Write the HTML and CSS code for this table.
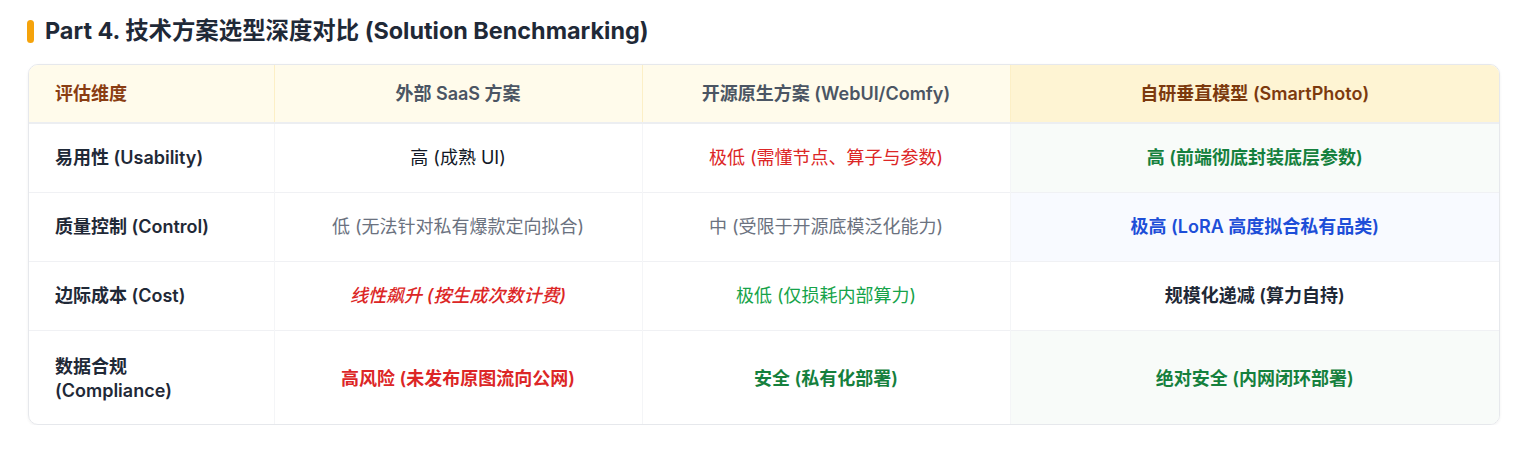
FILE: index.html
```html
<!DOCTYPE html>
<html lang="zh-CN">
<head>
<meta charset="utf-8">
<title>Solution Benchmarking</title>
<link rel="stylesheet" href="styles.css">
</head>
<body>
<section class="section">
  <h2 class="title"><span class="title-bar"></span>Part 4. 技术方案选型深度对比 (Solution Benchmarking)</h2>
  <div class="table-wrap">
    <table class="cmp">
      <colgroup>
        <col class="c1"><col class="c2"><col class="c3"><col class="c4">
      </colgroup>
      <thead>
        <tr>
          <th class="h-dim">评估维度</th>
          <th class="h-mid">外部 SaaS 方案</th>
          <th class="h-mid">开源原生方案 (WebUI/Comfy)</th>
          <th class="h-own">自研垂直模型 (SmartPhoto)</th>
        </tr>
      </thead>
      <tbody>
        <tr>
          <td class="dim">易用性 (Usability)</td>
          <td class="t-dark">高 (成熟 UI)</td>
          <td class="t-red">极低 (需懂节点、算子与参数)</td>
          <td class="own own-green t-green-b">高 (前端彻底封装底层参数)</td>
        </tr>
        <tr>
          <td class="dim">质量控制 (Control)</td>
          <td class="t-gray">低 (无法针对私有爆款定向拟合)</td>
          <td class="t-gray">中 (受限于开源底模泛化能力)</td>
          <td class="own own-blue t-blue-b">极高 (LoRA 高度拟合私有品类)</td>
        </tr>
        <tr>
          <td class="dim">边际成本 (Cost)</td>
          <td class="t-red-i">线性飙升 (按生成次数计费)</td>
          <td class="t-green">极低 (仅损耗内部算力)</td>
          <td class="own t-dark-b">规模化递减 (算力自持)</td>
        </tr>
        <tr>
          <td class="dim">数据合规<br>(Compliance)</td>
          <td class="t-red-b">高风险 (未发布原图流向公网)</td>
          <td class="t-green-b">安全 (私有化部署)</td>
          <td class="own own-green t-green-b">绝对安全 (内网闭环部署)</td>
        </tr>
      </tbody>
    </table>
  </div>
</section>
</body>
</html>
```

FILE: styles.css
```css
* { box-sizing: border-box; }

html, body {
  margin: 0;
  padding: 0;
  background: #ffffff;
}

body {
  font-family: Inter, "Noto Sans CJK SC", "Noto Sans", sans-serif;
  color: #1f2937;
}

.section {
  padding: 17px 24px 0 28px;
}

.title {
  display: flex;
  align-items: center;
  gap: 11px;
  margin: 0;
  font-size: 23.4px;
  font-weight: 700;
  line-height: 28px;
  color: #1f2937;
}

.title-bar {
  display: inline-block;
  flex: none;
  width: 7px;
  height: 23px;
  border-radius: 4px;
  background: #f5a30b;
  margin-left: -1px;
}

.table-wrap {
  margin-top: 19px;
  width: 1472px;
  border: 1px solid #e6e8ec;
  border-radius: 10px;
  overflow: hidden;
  box-shadow: 0 1px 3px rgba(17, 24, 39, 0.06);
}

.cmp {
  width: 100%;
  border-collapse: collapse;
  table-layout: fixed;
  font-size: 18px;
  line-height: 24px;
}

.c1 { width: 245px; }
.c2 { width: 368px; }
.c3 { width: 368px; }
.c4 { width: auto; }

.cmp th {
  height: 58px;
  padding: 0 26px;
  font-weight: 600;
  background: #fffbeb;
  border-bottom: 2px solid #eceef1;
  border-left: 1px solid #fcefc6;
  text-align: center;
}

.cmp th:first-child { border-left: none; text-align: left; }

.h-dim { color: #8a3d12; }
.h-mid { color: #4b5563; }
.h-own { color: #7c3a0e; background: #fef4d3 !important; }

.cmp td {
  height: 69px;
  padding: 0 26px;
  text-align: center;
  border-top: 1px solid #f0f1f4;
  border-left: 1px solid #f4f5f7;
  vertical-align: middle;
}

.cmp tbody tr:first-child td { border-top: none; }
.cmp tbody tr:last-child td { height: 94px; padding-top: 4px; }

.cmp td.dim {
  border-left: none;
  text-align: left;
  font-weight: 600;
  color: #1f2937;
}

.own-green { background: #f8fbf9; }
.own-blue { background: #f8faff; }

.t-dark { color: #111827; font-weight: 400; }
.t-dark-b { color: #1f2937; font-weight: 600; }
.t-gray { color: #6b7280; font-weight: 400; }
.t-red { color: #dc2626; font-weight: 400; }
.t-red-i { color: #dc2626; font-weight: 500; font-style: italic; }
.t-red-b { color: #dc2626; font-weight: 600; }
.t-green { color: #16a34a; font-weight: 400; }
.t-green-b { color: #15803d; font-weight: 600; }
.t-blue-b { color: #1d4ed8; font-weight: 600; }
```
